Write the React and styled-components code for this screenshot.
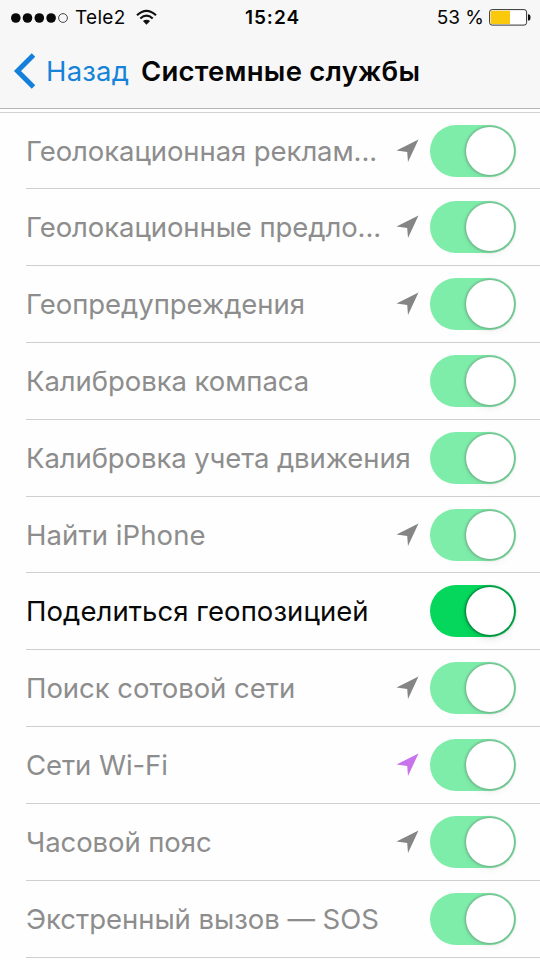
import React from "react";
import styled, { createGlobalStyle } from "styled-components";

const GlobalStyle = createGlobalStyle`
  * { box-sizing: border-box; }
  body { margin: 0; background: #fff; overflow: hidden; }
`;

const Screen = styled.main`
  display: flex;
  flex-direction: column;
  width: 540px;
  height: 960px;
  overflow: hidden;
  background: #fefefe;
  color: #050505;
  font-family: Inter, "Liberation Sans", sans-serif;
`;

const Header = styled.header`
  flex: none;
  height: 109px;
  background: #f7f7f8;
  border-bottom: 1px solid #b4b4b9;
`;

const StatusBar = styled.div`
  display: grid;
  grid-template-columns: 1fr auto 1fr;
  align-items: center;
  height: 35px;
  padding: 0 9px 0 11px;
  font-size: 19px;
  line-height: 35px;
`;

const StatusGroup = styled.div`
  display: flex;
  align-items: center;
  justify-content: ${({ $end }) => ($end ? "flex-end" : "flex-start")};
`;

const Carrier = styled.span`
  margin: 0 10px 0 7px;
  letter-spacing: 0.3px;
`;

const Clock = styled.span`
  padding-left: 3px;
  font-weight: 600;
  letter-spacing: 1px;
`;

const Percent = styled.span`
  margin-right: 5px;
`;

const NavBar = styled.nav`
  display: flex;
  align-items: center;
  height: 71px;
  padding-left: 13px;
`;

const BackLink = styled.a`
  display: flex;
  align-items: center;
  width: 128px;
  color: #1584d8;
  font-size: 27.5px;
  letter-spacing: 0.2px;
  white-space: nowrap;
`;

const BackLabel = styled.span`
  margin-left: 11px;
`;

const Title = styled.h1`
  margin: 0;
  font-size: 27.5px;
  font-weight: 600;
  line-height: 36px;
  letter-spacing: 0.24px;
  white-space: nowrap;
`;

const List = styled.ul`
  flex: none;
  margin: 3px 0 0;
  padding: 0;
  list-style: none;
  border-top: 1px solid #d2d2d6;
`;

const Row = styled.li`
  display: flex;
  align-items: center;
  height: 76.9px;
  margin-left: 26px;
  padding-right: 24.5px;
  border-bottom: 1px solid #cfcfd1;

  &:first-child {
    height: 76px;
  }
`;

const RowLabel = styled.span`
  flex: 1;
  color: ${({ $active }) => ($active ? "#080808" : "#8d8d8d")};
  font-size: 27.5px;
  line-height: 36px;
  letter-spacing: ${({ $spacing }) => $spacing}px;
  white-space: nowrap;
`;

const ArrowIcon = styled.svg`
  flex: none;
  width: 24px;
  height: 24px;
  margin-right: 9.5px;
  fill: ${({ $tone }) => $tone};
`;

const Toggle = styled.span`
  flex: none;
  display: flex;
  justify-content: flex-end;
  width: 86px;
  height: 52px;
  padding: 2px;
  border-radius: 26px;
  background: ${({ $active }) => ($active ? "#04d75b" : "#7eeda9")};
`;

const Knob = styled.span`
  width: 48px;
  height: 48px;
  border-radius: 50%;
  background: #fff;
  box-shadow: ${({ $active }) =>
    $active
      ? "0 0 2px 1.5px rgba(0, 60, 30, .5), 0 5px 6px rgba(0, 0, 0, .08)"
      : "0 0 2px 1.5px rgba(85, 85, 85, .32), 0 5px 6px rgba(0, 0, 0, .04)"};
`;

const GRAY = "#858585";
const services = [
  { label: "Геолокационная реклам...", arrow: GRAY, spacing: -0.08 },
  { label: "Геолокационные предло...", arrow: GRAY, spacing: -0.08 },
  { label: "Геопредупреждения", arrow: GRAY, spacing: -0.05 },
  { label: "Калибровка компаса", spacing: -0.06 },
  { label: "Калибровка учета движения", spacing: -0.09 },
  { label: "Найти iPhone", arrow: GRAY, spacing: 0.08 },
  { label: "Поделиться геопозицией", active: true, spacing: 0.07 },
  { label: "Поиск сотовой сети", arrow: GRAY, spacing: -0.04 },
  { label: "Сети Wi-Fi", arrow: "#c774ec", spacing: -0.08 },
  { label: "Часовой пояс", arrow: GRAY, spacing: -0.08 },
  { label: "Экстренный вызов — SOS", spacing: -0.04 },
];

function SignalDots() {
  return (
    <svg width="57" height="12" viewBox="0 0 57 12">
      {[4.8, 16.5, 28.3, 40.1].map((x) => (
        <circle key={x} cx={x} cy="6" r="4.8" fill="#080808" />
      ))}
      <circle cx="52" cy="6" r="4.4" fill="none" stroke="#333" strokeWidth="0.9" />
    </svg>
  );
}

function WifiIcon() {
  return (
    <svg width="21" height="17" viewBox="0 0 21 17" fill="none" stroke="#111" strokeWidth="2.2">
      <path d="M1 6.2Q10.5-2.6 20 6.2M4.3 9.5Q10.5 3.9 16.7 9.5" />
      <path d="M6.9 12.1Q10.5 9.2 14.1 12.1L10.5 15.8Z" fill="#111" stroke="none" />
    </svg>
  );
}

function BatteryIcon() {
  return (
    <svg width="42" height="17" viewBox="0 0 42 17">
      <rect x="0.6" y="0.6" width="37" height="15.5" rx="2.5" fill="#fff" stroke="#333" strokeWidth="1" />
      <path d="M3 1.7H21V15H3Q1.7 15 1.7 13.7V3Q1.7 1.7 3 1.7Z" fill="#fac90c" />
      <path d="M39 5.2Q41.5 5.2 41.5 8.4T39 11.6Z" fill="#111" />
    </svg>
  );
}

function ServiceRow({ label, arrow, active, spacing }) {
  return (
    <Row>
      <RowLabel $active={active} $spacing={spacing}>{label}</RowLabel>
      {arrow && (
        <ArrowIcon $tone={arrow} viewBox="0 0 24 24">
          <path d="M22.5 0.5L12 23L11.2 13L0.5 11.5Z" />
        </ArrowIcon>
      )}
      <Toggle $active={active}><Knob $active={active} /></Toggle>
    </Row>
  );
}

export default function App() {
  return (
    <>
      <GlobalStyle />
      <Screen>
        <Header>
          <StatusBar>
            <StatusGroup>
              <SignalDots />
              <Carrier>Tele2</Carrier>
              <WifiIcon />
            </StatusGroup>
            <Clock>15:24</Clock>
            <StatusGroup $end>
              <Percent>53 %</Percent>
              <BatteryIcon />
            </StatusGroup>
          </StatusBar>
          <NavBar>
            <BackLink>
              <svg width="22" height="36" viewBox="0 0 22 36" fill="none" stroke="#1580dc" strokeWidth="5">
                <path d="M20.5 2L4.5 18L20.5 34" />
              </svg>
              <BackLabel>Назад</BackLabel>
            </BackLink>
            <Title>Системные службы</Title>
          </NavBar>
        </Header>
        <List>
          {services.map((service) => <ServiceRow key={service.label} {...service} />)}
        </List>
      </Screen>
    </>
  );
}
